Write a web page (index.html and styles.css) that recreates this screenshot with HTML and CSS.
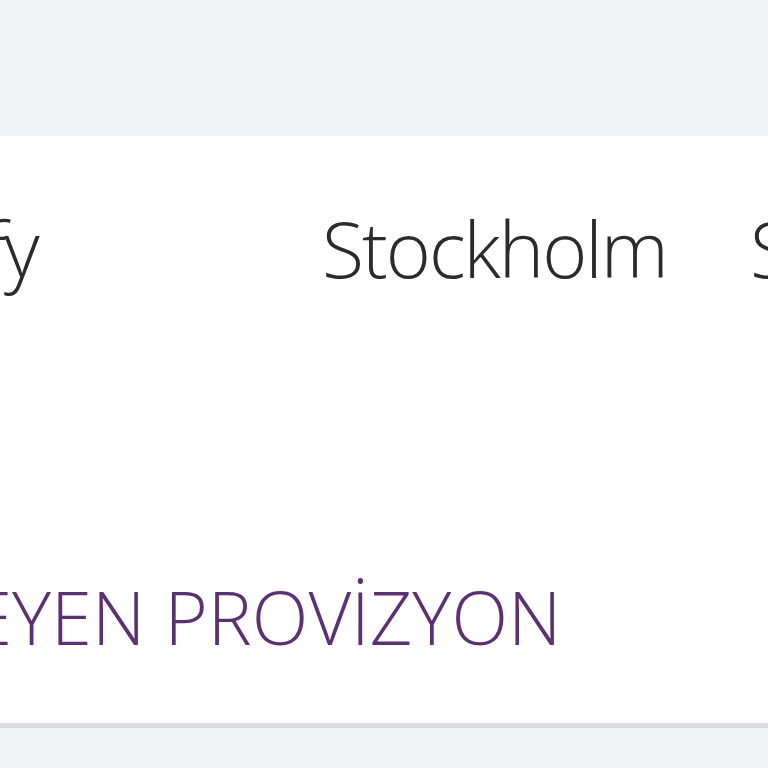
FILE: index.html
```html
<!DOCTYPE html>
<html lang="tr">
<head>
    <meta charset="UTF-8">
    <title>Provizyonlar</title>
    <link rel="stylesheet" href="styles.css">
</head>
<body>

<div class="panel">
    <div class="row">
        <span class="cell merchant">Spotify</span>
        <span class="cell city">Stockholm</span>
        <span class="cell country">SE</span>
    </div>
    <div class="status">BEKLEYEN PROVİZYON</div>
</div>

</body>
</html>
```

FILE: styles.css
```css
body {
    margin: 0;
    padding-top: 136px;
    background: #f4f5f9;
    font-family: "Open Sans", sans-serif;
    overflow: hidden;
}

.panel {
    background: #fff;
    height: 587px;
    border-bottom: 5px solid #dcdde3;
    overflow: hidden;
}

.row {
    display: flex;
    align-items: baseline;
    white-space: nowrap;
    margin-top: 60px;
    margin-left: -183px;
    font-size: 77px;
    font-weight: 300;
    letter-spacing: -2px;
    color: #2b2b2b;
}

.cell {
    flex: none;
}

.merchant {
    width: 505px;
}

.city {
    width: 428px;
}

.status {
    white-space: nowrap;
    margin-top: 265px;
    margin-left: -197px;
    font-size: 74px;
    font-weight: 300;
    color: #5b3173;
}
```
